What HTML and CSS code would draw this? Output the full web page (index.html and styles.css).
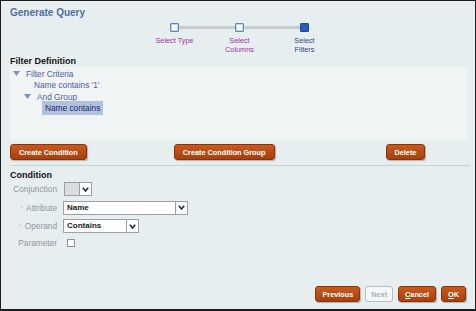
FILE: index.html
```html
<!DOCTYPE html>
<html lang="en">

<head>
    <meta charset="UTF-8">
    <meta name="viewport" content="width=device-width, initial-scale=1.0">
    <title>Generate Query</title>
    <link rel="stylesheet" href="styles.css">
</head>

<body>
    <div class="dialog">
        <div class="title">Generate Query</div>

        <!-- Tren de pasos -->
        <div class="train">
            <div class="step visited">
                <span class="stop"></span>
                <span class="step-label">Select Type</span>
            </div>
            <div class="step visited">
                <span class="stop"></span>
                <span class="step-label">Select<br>Columns</span>
            </div>
            <div class="step current">
                <span class="stop"></span>
                <span class="step-label">Select<br>Filters</span>
            </div>
        </div>

        <!-- Definicion del filtro -->
        <div class="section-title">Filter Definition</div>
        <div class="tree">
            <div class="tree-row level-0">
                <svg class="toggle" width="7" height="5" viewBox="0 0 7 5"><path d="M0 0 H7 L3.5 5 Z" fill="#7d93bd"/></svg>
                <span>Filter Criteria</span>
            </div>
            <div class="tree-row level-1 leaf"><span>Name contains '1'</span></div>
            <div class="tree-row level-1">
                <svg class="toggle" width="7" height="5" viewBox="0 0 7 5"><path d="M0 0 H7 L3.5 5 Z" fill="#7d93bd"/></svg>
                <span>And Group</span>
            </div>
            <div class="tree-row level-2 leaf"><span class="selected">Name contains</span></div>
        </div>

        <div class="toolbar">
            <button class="button">Create Condition</button>
            <button class="button group">Create Condition Group</button>
            <button class="button delete">Delete</button>
        </div>

        <div class="divider"></div>

        <!-- Condicion -->
        <div class="section-title">Condition</div>
        <div class="form">
            <span class="label">Conjunction</span>
            <div class="select conjunction disabled">
                <span class="select-value"></span>
                <span class="select-arrow"><svg width="7" height="5" viewBox="0 0 7 5"><path d="M0.8 0.8 L3.5 4 L6.2 0.8" fill="none" stroke="#1f2a44" stroke-width="1.6"/></svg></span>
            </div>

            <span class="label"><span class="req">*</span>Attribute</span>
            <div class="select attribute">
                <span class="select-value">Name</span>
                <span class="select-arrow"><svg width="7" height="5" viewBox="0 0 7 5"><path d="M0.8 0.8 L3.5 4 L6.2 0.8" fill="none" stroke="#1f2a44" stroke-width="1.6"/></svg></span>
            </div>

            <span class="label"><span class="req">*</span>Operand</span>
            <div class="select operand">
                <span class="select-value">Contains</span>
                <span class="select-arrow"><svg width="7" height="5" viewBox="0 0 7 5"><path d="M0.8 0.8 L3.5 4 L6.2 0.8" fill="none" stroke="#1f2a44" stroke-width="1.6"/></svg></span>
            </div>

            <span class="label">Parameter</span>
            <span class="checkbox"></span>
        </div>

        <div class="footer">
            <button class="button small">Previous</button>
            <button class="button small disabled">Next</button>
            <button class="button small"><u>C</u>ancel</button>
            <button class="button small"><u>O</u>K</button>
        </div>
    </div>
</body>

</html>
```

FILE: styles.css
```css
/* Estilos generales */
body {
    margin: 0;
    font-family: "Liberation Sans", Arial, sans-serif;
}

.dialog {
    box-sizing: border-box;
    width: 476px;
    height: 311px;
    border: 1px solid #1c1c1c;
    border-bottom-width: 2px;
    background-color: #e7eef0;
    display: flex;
    flex-direction: column;
    padding: 6px 6px 7px 9px;
}

.title {
    font-size: 10px;
    font-weight: bold;
    line-height: 12px;
    color: #4d6f9f;
}

/* Tren de pasos */
.train {
    display: flex;
    justify-content: center;
    margin-top: 4px;
}

.step {
    position: relative;
    width: 65px;
    display: flex;
    flex-direction: column;
    align-items: center;
}

.step:not(:first-child)::before {
    content: "";
    position: absolute;
    top: 3px;
    right: 50%;
    width: 100%;
    height: 3px;
    background-color: #c9cbcc;
}

.stop {
    position: relative;
    z-index: 1;
    box-sizing: border-box;
    width: 9px;
    height: 9px;
    border: 1px solid #5c84c6;
    box-shadow: inset 0 0 0 1px #c3d3ea;
    background-color: #fff;
    border-radius: 1px;
}

.current .stop {
    background-color: #2b5cbf;
    border-color: #1d469c;
    box-shadow: none;
}

.step-label {
    margin-top: 4px;
    font-size: 7.3px;
    line-height: 9px;
    text-align: center;
    color: #9c35a0;
}

.current .step-label {
    color: #2f4488;
}

.section-title {
    margin-top: 2px;
    font-size: 9px;
    font-weight: bold;
    line-height: 11px;
    color: #111;
}

/* Arbol del filtro */
.tree {
    height: 73px;
    margin-right: 2px;
    padding-top: 1px;
    box-sizing: border-box;
    background-color: #f0f4f5;
}

.tree-row {
    display: flex;
    align-items: center;
    height: 11.5px;
    font-size: 8.3px;
    color: #4e5c9c;
}

.toggle {
    margin-right: 6px;
}

.level-0 {
    padding-left: 3px;
}

.level-1 {
    padding-left: 14px;
}

.level-1.leaf {
    padding-left: 24px;
}

.level-2.leaf {
    padding-left: 32px;
}

.selected {
    background-color: #b2c2dd;
    color: #1c2878;
    padding: 2px 3px;
}

/* Botones */
.button {
    box-sizing: border-box;
    height: 16px;
    padding: 0 8px;
    font-family: inherit;
    font-size: 7.3px;
    font-weight: bold;
    color: #fff;
    background: linear-gradient(#c65b21, #a8400d);
    border: 1px solid #8d3208;
    border-radius: 3px;
    box-shadow: 1px 1px 1px rgba(0, 0, 0, 0.25);
    cursor: pointer;
}

.button.small {
    padding: 0 6px;
}

.button.disabled {
    background: #f4f7f8;
    border-color: #b5bcc5;
    color: #a9b0ba;
    box-shadow: none;
    padding: 0 5px;
}

.toolbar {
    display: flex;
    margin-top: 4px;
}

.toolbar .group {
    margin-left: 87px;
}

.toolbar .delete {
    margin-left: 111px;
}

.divider {
    height: 1px;
    margin-top: 5px;
    margin-right: -1px;
    background-color: #c9d0d3;
}

.divider + .section-title {
    margin-top: 4px;
}

/* Formulario de condicion */
.form {
    display: grid;
    grid-template-columns: 47px auto;
    column-gap: 6px;
    row-gap: 4.5px;
    align-items: center;
    justify-items: start;
    margin-top: 1px;
}

.label {
    justify-self: end;
    font-size: 8.3px;
    color: #8f979a;
}

.req {
    color: #c0c6c8;
    font-size: 7px;
    margin-right: 3px;
}

.select {
    box-sizing: border-box;
    display: flex;
    height: 14px;
    border: 1px solid #9aa0a4;
    background-color: #fff;
}

.select-value {
    flex: 1;
    padding-left: 3px;
    font-size: 8px;
    font-weight: bold;
    line-height: 12px;
    color: #1a1a1a;
}

.select-arrow {
    box-sizing: border-box;
    width: 12px;
    display: flex;
    align-items: center;
    justify-content: center;
    border-left: 1px solid #9aa0a4;
    background-color: #fff;
}

.attribute {
    width: 125px;
}

.operand {
    width: 76px;
}

.conjunction {
    width: 28px;
    margin-left: 1px;
}

.conjunction .select-value {
    background-color: #d9dddf;
}

.checkbox {
    box-sizing: border-box;
    width: 8px;
    height: 8px;
    margin-left: 4px;
    border: 1px solid #8a9296;
    background-color: #fff;
}

.footer {
    display: flex;
    justify-content: flex-end;
    gap: 5px;
    margin-top: auto;
    margin-right: 3px;
}
```
